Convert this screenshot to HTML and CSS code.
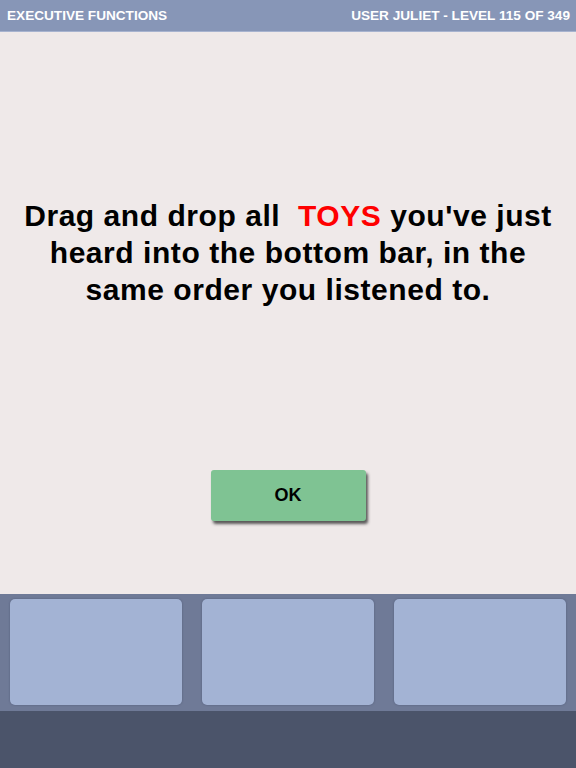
FILE: index.html
```html
<!DOCTYPE html>
<html>
<head>
<meta charset="utf-8">
<link rel="stylesheet" href="styles.css">
</head>
<body>
<div class="app">
  <header class="topbar">
    <span class="title">EXECUTIVE FUNCTIONS</span>
    <span class="status">USER JULIET - LEVEL 115 OF 349</span>
  </header>
  <main class="stage">
    <p class="prompt">Drag and drop all&nbsp; <span class="keyword">TOYS</span> you've just heard into the bottom bar, in the same order you listened to.</p>
    <button class="ok-btn">OK</button>
  </main>
  <section class="tray">
    <div class="slot"></div>
    <div class="slot"></div>
    <div class="slot"></div>
  </section>
  <footer class="base"></footer>
</div>
</body>
</html>
```
FILE: styles.css
```css
* { box-sizing: border-box; }
html, body { margin: 0; padding: 0; }
body {
  width: 576px;
  height: 768px;
  overflow: hidden;
  font-family: "Liberation Sans", Arial, sans-serif;
  background: #efe9e9;
}
.app {
  display: flex;
  flex-direction: column;
  height: 768px;
}
.topbar {
  height: 32px;
  flex: none;
  display: flex;
  justify-content: space-between;
  align-items: center;
  padding: 0 6px 1px 7px;
  background: #8796b7;
  border-bottom: 1px solid #a7b3cf;
  color: #ffffff;
  font-weight: bold;
  font-size: 13.6px;
}
.stage {
  flex: 1;
  display: flex;
  flex-direction: column;
  align-items: center;
}
.prompt {
  margin: 165px 0 0 0;
  width: 540px;
  text-align: center;
  font-size: 30px;
  letter-spacing: 0.55px;
  line-height: 37px;
  font-weight: bold;
  color: #000;
}
.keyword { color: #ff0000; }
.ok-btn {
  margin-top: 162px;
  width: 155px;
  height: 51px;
  border: none;
  border-radius: 3px;
  background: #7fc393;
  box-shadow: 2px 3px 3px rgba(40, 40, 40, 0.75);
  font-family: "Liberation Sans", Arial, sans-serif;
  font-weight: bold;
  font-size: 18px;
  color: #000;
  padding: 0;
}
.tray {
  height: 117px;
  flex: none;
  display: flex;
  gap: 20px;
  padding: 5px 10px 6px 10px;
  background: #6f7a97;
}
.slot {
  flex: 1;
  background: #a3b3d4;
  border-radius: 5px;
  box-shadow: 0 0 2px rgba(60, 70, 100, 0.6);
}
.base {
  height: 57px;
  flex: none;
  background: #4b546a;
}
```
